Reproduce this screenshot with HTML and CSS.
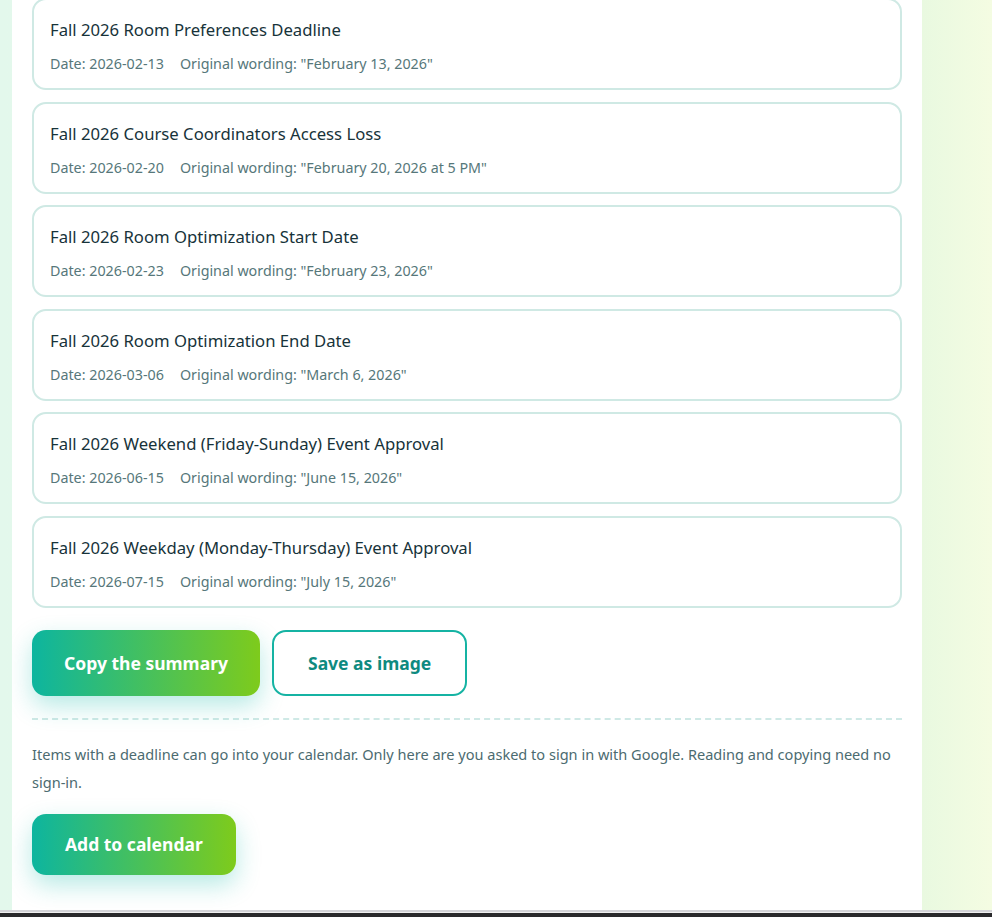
FILE: index.html
```html
<!DOCTYPE html>
<html lang="en">
<head>
    <meta charset="UTF-8">
    <meta name="viewport" content="width=device-width, initial-scale=1.0">
    <title>Deadlines</title>
    <link rel="stylesheet" href="styles.css">
</head>
<body>
    <div class="page">
        <main class="panel">
            <ul class="deadlines">
                <li class="deadline">
                    <p class="deadline_title">Fall 2026 Room Preferences Deadline</p>
                    <p class="deadline_meta"><span>Date: 2026-02-13</span><span>Original wording: "February 13, 2026"</span></p>
                </li>
                <li class="deadline">
                    <p class="deadline_title">Fall 2026 Course Coordinators Access Loss</p>
                    <p class="deadline_meta"><span>Date: 2026-02-20</span><span>Original wording: "February 20, 2026 at 5 PM"</span></p>
                </li>
                <li class="deadline">
                    <p class="deadline_title">Fall 2026 Room Optimization Start Date</p>
                    <p class="deadline_meta"><span>Date: 2026-02-23</span><span>Original wording: "February 23, 2026"</span></p>
                </li>
                <li class="deadline">
                    <p class="deadline_title">Fall 2026 Room Optimization End Date</p>
                    <p class="deadline_meta"><span>Date: 2026-03-06</span><span>Original wording: "March 6, 2026"</span></p>
                </li>
                <li class="deadline">
                    <p class="deadline_title">Fall 2026 Weekend (Friday-Sunday) Event Approval</p>
                    <p class="deadline_meta"><span>Date: 2026-06-15</span><span>Original wording: "June 15, 2026"</span></p>
                </li>
                <li class="deadline">
                    <p class="deadline_title">Fall 2026 Weekday (Monday-Thursday) Event Approval</p>
                    <p class="deadline_meta"><span>Date: 2026-07-15</span><span>Original wording: "July 15, 2026"</span></p>
                </li>
            </ul>

            <div class="actions">
                <button class="btn btn_main">Copy the summary</button>
                <button class="btn btn_outline">Save as image</button>
            </div>

            <hr class="divider">

            <p class="calendar_note">Items with a deadline can go into your calendar. Only here are you asked to sign in with Google. Reading and copying need no <span class="nowrap">sign-in.</span></p>

            <button class="btn btn_main btn_calendar">Add to calendar</button>
        </main>
    </div>
    <div class="window_edge"></div>
</body>
</html>
```

FILE: styles.css
```css
body {
    margin: 0;
    padding: 0;
    font-family: "Noto Sans", Arial, sans-serif;
    background: linear-gradient(90deg, #e3f8ec 0%, #e9f9e0 93%, #f4fce2 100%);
    height: 917px;
    overflow: hidden;
}

.page {
    padding-left: 12px;
    height: 910px;
}

.panel {
    width: 910px;
    height: 910px;
    box-sizing: border-box;
    background-color: #ffffff;
    padding: 0 20px;
    overflow: hidden;
}

.deadlines {
    list-style-type: none;
    margin: -2px 0 0 0;
    padding: 0;
    display: flex;
    flex-direction: column;
    gap: 11.5px;
}

.deadline {
    border: 2px solid #cfe9e4;
    border-radius: 14px;
    padding: 18px 16px 14px;
}

.deadline_title {
    margin: 0;
    font-size: 16.7px;
    line-height: 24px;
    color: #17333a;
}

.deadline_meta {
    margin: 12px 0 0 0;
    font-size: 14.3px;
    line-height: 20px;
    color: #56777a;
    display: flex;
    gap: 16px;
}

.actions {
    display: flex;
    gap: 12px;
    margin-top: 22px;
}

.btn {
    font-family: inherit;
    font-size: 17.5px;
    font-weight: 700;
    border-radius: 14px;
    padding: 0 32px;
    height: 66px;
    cursor: pointer;
}

.btn_main {
    border: none;
    color: #ffffff;
    background: linear-gradient(90deg, #0db59f 0%, #7ecb1c 100%);
    box-shadow: 0 10px 24px rgba(20, 185, 170, 0.3);
}

.btn_outline {
    border: 2px solid #15b3a3;
    background-color: #ffffff;
    color: #0e8a80;
    padding: 0 34px;
}

.divider {
    border: none;
    border-top: 2px dashed #cfe9e6;
    margin: 22px 0 0 0;
}

.calendar_note {
    margin: 20px 0 0 0;
    font-size: 14.55px;
    line-height: 28px;
    color: #4c6b70;
}

.nowrap {
    white-space: nowrap;
}

.btn_calendar {
    margin-top: 18px;
    height: 61px;
    padding: 0 33px;
}

.window_edge {
    height: 7px;
    background: linear-gradient(180deg, #d4d4d8 0, #d4d4d8 2px, #f0f0f0 2px, #f0f0f0 3px, #2a2a2c 3px);
}
```
